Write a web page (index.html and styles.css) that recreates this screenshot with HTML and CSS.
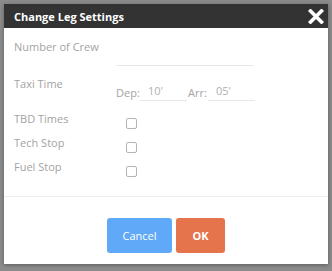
FILE: index.html
```html
<!DOCTYPE html>
<html lang="en">
<head>
    <meta charset="UTF-8">
    <title>Change Leg Settings</title>
    <link rel="stylesheet" href="styles.css">
</head>
<body>
    <div class="dialog">
        <!-- Header -->
        <div class="dialog-header">
            <span class="dialog-title">Change Leg Settings</span>
            <svg class="close-btn" width="16" height="15" viewBox="0 0 16 15">
                <path d="M2.5 2 L13.5 13 M13.5 2 L2.5 13" stroke="#fff" stroke-width="3.6" stroke-linecap="square"/>
            </svg>
        </div>

        <!-- Body -->
        <div class="dialog-body">
            <div class="row row-input">
                <label class="row-label">Number of Crew</label>
                <input type="text" class="line-input crew-input" value="">
            </div>
            <div class="row row-input">
                <label class="row-label taxi-label">Taxi Time</label>
                <div class="taxi-fields">
                    <span class="field-label dep-label">Dep:</span>
                    <input type="text" class="line-input time-input" value="10'">
                    <span class="field-label arr-label">Arr:</span>
                    <input type="text" class="line-input time-input" value="05'">
                </div>
            </div>
            <div class="row row-check">
                <label class="row-label">TBD Times</label>
                <input type="checkbox" class="check">
            </div>
            <div class="row row-check">
                <label class="row-label">Tech Stop</label>
                <input type="checkbox" class="check">
            </div>
            <div class="row row-check">
                <label class="row-label">Fuel Stop</label>
                <input type="checkbox" class="check">
            </div>
        </div>

        <!-- Footer -->
        <div class="dialog-footer">
            <button class="btn btn-cancel">Cancel</button>
            <button class="btn btn-ok">OK</button>
        </div>
    </div>
</body>
</html>
```

FILE: styles.css
```css
body {
    font-family: "Open Sans", Arial, sans-serif;
    margin: 0;
    padding: 4px;
    background-color: #8b8b8b;
}
.dialog {
    width: 324px;
    height: 260px;
    background-color: #ffffff;
    box-shadow: 0 1px 4px rgba(0, 0, 0, 0.35);
    display: flex;
    flex-direction: column;
}
.dialog-header {
    height: 24px;
    background-color: #333333;
    display: flex;
    align-items: center;
    justify-content: space-between;
    padding: 0 4px 0 10px;
}
.dialog-title {
    color: #ffffff;
    font-size: 11px;
    font-weight: 700;
}
.close-btn {
    display: block;
}
.dialog-body {
    padding: 10px 10px 14px;
    border-bottom: 1px solid #eeeeee;
}
.row {
    display: flex;
    align-items: flex-start;
}
.row-input {
    height: 28px;
    margin-bottom: 8px;
}
.row-check {
    height: 24px;
}
.row-label {
    width: 102px;
    flex-shrink: 0;
    padding-top: 1px;
    font-size: 11px;
    line-height: 16px;
    color: #a3a3a3;
}
.taxi-label {
    padding-top: 2px;
    height: 16px;
}
.line-input {
    box-sizing: border-box;
    height: 20px;
    border: none;
    border-bottom: 1px solid #e8e8e8;
    padding: 0 0 1px 8px;
    font-family: "Open Sans", Arial, sans-serif;
    font-size: 11px;
    color: #b0b0b0;
    outline: none;
}
.crew-input {
    width: 138px;
    margin-top: 8px;
}
.taxi-fields {
    display: flex;
    align-items: center;
    margin-top: 7px;
}
.field-label {
    font-size: 11px;
    color: #a3a3a3;
    padding-top: 2px;
}
.dep-label {
    width: 24px;
}
.arr-label {
    width: 20px;
    margin-left: 1px;
}
.time-input {
    width: 47px;
}
.check {
    appearance: none;
    width: 11px;
    height: 11px;
    margin: 8px 0 0 10px;
    border: 1px solid #b5b5b5;
    border-radius: 2px;
    background-color: #ffffff;
}
.dialog-footer {
    flex: 1;
    display: flex;
    justify-content: center;
    align-items: flex-start;
    gap: 4px;
    padding-top: 21px;
}
.btn {
    height: 35px;
    border: none;
    border-radius: 3px;
    color: #ffffff;
    font-family: "Open Sans", Arial, sans-serif;
    font-size: 11px;
    cursor: pointer;
}
.btn-cancel {
    width: 65px;
    background-color: #60a9f8;
}
.btn-ok {
    width: 49px;
    background-color: #e5744d;
    font-weight: bold;
}
```
